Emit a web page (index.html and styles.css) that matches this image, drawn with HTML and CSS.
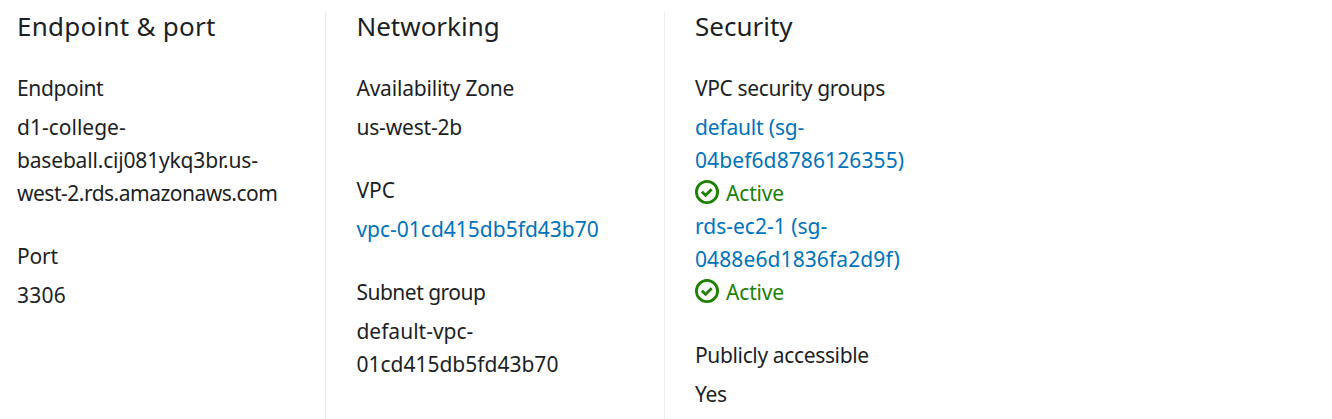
FILE: index.html
```html
<!DOCTYPE html>
<html lang="en">
<head>
<meta charset="utf-8">
<title>Connectivity &amp; security</title>
<link rel="stylesheet" href="styles.css">
</head>
<body>
<main class="columns">
  <section class="column">
    <h2 class="wide">Endpoint &amp; port</h2>
    <dl>
      <dt class="snug">Endpoint</dt>
      <dd>d1-college-<br><span class="slight">baseball.cij081ykq3br.us-</span><br><span class="tight">west-2.rds.amazonaws.com</span></dd>
      <dt class="slight">Port</dt>
      <dd class="wide">3306</dd>
    </dl>
  </section>
  <section class="column">
    <h2>Networking</h2>
    <dl>
      <dt class="slight">Availability Zone</dt>
      <dd class="slight">us-west-2b</dd>
      <dt>VPC</dt>
      <dd><a>vpc-01cd415db5fd43b70</a></dd>
      <dt class="tight">Subnet group</dt>
      <dd>default-vpc-<br>01cd415db5fd43b70</dd>
      <dt class="tight">Subnets</dt>
    </dl>
  </section>
  <section class="column">
    <h2>Security</h2>
    <dl>
      <dt class="snug">VPC security groups</dt>
      <dd>
        <a><span class="slight">default (sg-</span><br><span class="loose">04bef6d8786126355)</span></a>
        <div class="status"><svg viewBox="0 0 24 24"><circle cx="12" cy="12" r="10.6"/><path d="M6.8 11.8l3.8 3.5 6.1-6.1"/></svg><span class="slight">Active</span></div>
        <a>rds-ec2-1 (sg-<br><span class="loose">0488e6d1836fa2d9f)</span></a>
        <div class="status"><svg viewBox="0 0 24 24"><circle cx="12" cy="12" r="10.6"/><path d="M6.8 11.8l3.8 3.5 6.1-6.1"/></svg><span class="slight">Active</span></div>
      </dd>
      <dt class="snug">Publicly accessible</dt>
      <dd class="snug">Yes</dd>
    </dl>
  </section>
</main>
</body>
</html>
```
FILE: styles.css
```css
* { box-sizing: border-box; }
html { overflow: hidden; }
body {
  margin: 0;
  height: 419px;
  overflow: hidden;
  background: #fff;
  color: #1c1f25;
  font: 21px/33px "Noto Sans", sans-serif;
}
.columns {
  display: grid;
  grid-template-columns: 325px 339px 350px;
  height: 419px;
  padding-top: 12px;
  overflow: hidden;
}
.column { height: 407px; padding-left: 17px; }
.column + .column { border-left: 1px solid #eaeded; padding-left: 30.4px; }
.column:last-child { padding-left: 30px; }
h2 {
  margin: -2px 0 29px;
  font-size: 26px;
  line-height: 33px;
  font-weight: 400;
}
dl, dd { margin: 0; }
dd { margin: 6px 0 30px; }
a { color: #0073bb; }
.status { display: flex; align-items: center; gap: 7px; color: #1d8102; }
.status svg {
  width: 24px;
  height: 24px;
  margin-bottom: 3px;
  fill: none;
  stroke: currentColor;
  stroke-width: 2.8;
}

/* Tracking steps */
.wide { letter-spacing: 0.25px; }
.loose { letter-spacing: 0.1px; }
.slight { letter-spacing: -0.18px; }
.snug { letter-spacing: -0.36px; }
.tight { letter-spacing: -0.5px; }
```
